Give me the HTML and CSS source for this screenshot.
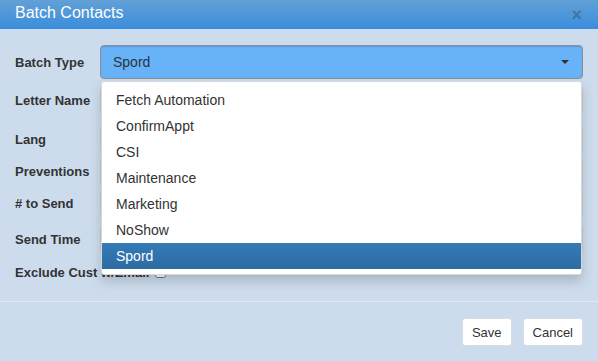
FILE: index.html
```html
<!DOCTYPE html>
<html lang="en">
<head>
    <meta charset="UTF-8">
    <meta name="viewport" content="width=device-width, initial-scale=1.0">
    <title>Batch Contacts</title>

    <link rel="stylesheet" href="styles.css">
</head>
<body>
    <div class="modal">
        <div class="modal-header">
            <h4>Batch Contacts</h4>
            <span class="close">&times;</span>
        </div>

        <div class="modal-body">
            <form class="form-grid">
                <label>Batch Type</label>
                <div class="select-wrap">
                    <div class="select-box">
                        <span>Spord</span>
                        <span class="caret"></span>
                    </div>
                    <ul class="dropdown">
                        <li>Fetch Automation</li>
                        <li>ConfirmAppt</li>
                        <li>CSI</li>
                        <li>Maintenance</li>
                        <li>Marketing</li>
                        <li>NoShow</li>
                        <li class="active">Spord</li>
                    </ul>
                </div>

                <label>Letter Name</label>
                <div class="field"><div class="input"></div></div>

                <label>Lang</label>
                <div class="field"><div class="input"></div></div>

                <label>Preventions</label>
                <div class="field"><div class="input input-blue"></div></div>

                <label># to Send</label>
                <div class="field"><div class="input"></div></div>

                <label>Send Time</label>
                <div class="field"><div class="input"></div></div>

                <label class="wide">Exclude Cust w/Email <input type="checkbox"></label>
            </form>
        </div>

        <div class="modal-footer">
            <button type="button">Save</button>
            <button type="button">Cancel</button>
        </div>
    </div>
</body>
</html>
```

FILE: styles.css
```css
body {
    margin: 0;
    font-family: "Liberation Sans", Arial, sans-serif;
    background-color: #cddced;
    color: #333;
}

.modal {
    width: 598px;
    height: 361px;
    overflow: hidden;
}

.modal-header {
    height: 29px;
    padding: 0 15px;
    display: flex;
    align-items: center;
    justify-content: space-between;
    background: linear-gradient(to bottom, #62a0d6, #3a8ddc);
}

.modal-header h4 {
    margin: 0;
    font-size: 16px;
    font-weight: normal;
    color: #fff;
    margin-top: -4px;
}

.close {
    font-size: 18px;
    font-weight: bold;
    color: #44698f;
    opacity: 0.75;
    margin-top: 2px;
    margin-right: 1px;
}

.modal-body {
    padding: 16px 15px 15px;
}

.form-grid {
    display: grid;
    grid-template-columns: 85px 1fr;
    grid-template-rows: 34px 42px 36px 29px 34px 38px 28px;
    align-items: center;
    margin: 0;
}

.form-grid label {
    font-size: 13px;
    font-weight: bold;
    color: #333;
}

.form-grid label.wide {
    grid-column: 1 / 3;
    display: flex;
    align-items: center;
    gap: 4px;
}

.form-grid input[type="checkbox"] {
    width: 11px;
    height: 11px;
    margin: 0 0 0 2px;
}

.select-wrap {
    position: relative;
    height: 34px;
}

.select-box {
    height: 32px;
    display: flex;
    align-items: center;
    justify-content: space-between;
    padding: 0 13px 0 12px;
    background-color: #68b2f7;
    border: 1px solid #8a8f96;
    border-radius: 4px;
    box-shadow: inset 0 1px 1px rgba(0, 0, 0, 0.12);
    font-size: 14px;
    color: #2b3440;
}

.caret {
    width: 0;
    height: 0;
    border-left: 4px solid transparent;
    border-right: 4px solid transparent;
    border-top: 4px solid #333;
}

.dropdown {
    position: absolute;
    top: 36px;
    left: 1px;
    right: 1px;
    margin: 0;
    padding: 5px 0;
    list-style: none;
    background-color: #fff;
    border: 1px solid #d4d8dd;
    border-radius: 3px;
    box-shadow: 0 6px 12px rgba(0, 0, 0, 0.18);
    z-index: 10;
}

.dropdown li {
    height: 26px;
    line-height: 26px;
    padding: 0 14px;
    font-size: 14px;
    color: #333;
}

.dropdown li.active {
    color: #fff;
    background: linear-gradient(to bottom, #337ab7, #2d6ca3);
}

.field {
    height: 100%;
    display: flex;
    align-items: center;
}

.input {
    width: 100%;
    height: 28px;
    background-color: #fff;
    border: 1px solid #ccc;
    border-radius: 4px;
}

.input-blue {
    background-color: #68b2f7;
}

.modal-footer {
    border-top: 1px solid #e2e8ef;
    padding: 16px 15px;
    display: flex;
    justify-content: flex-end;
    gap: 11px;
}

button {
    height: 28px;
    padding: 0 9px;
    font-family: "Liberation Sans", Arial, sans-serif;
    font-size: 13px;
    color: #333;
    background-color: #fff;
    border: 1px solid #d6dde5;
    border-radius: 3px;
    cursor: pointer;
}
```
